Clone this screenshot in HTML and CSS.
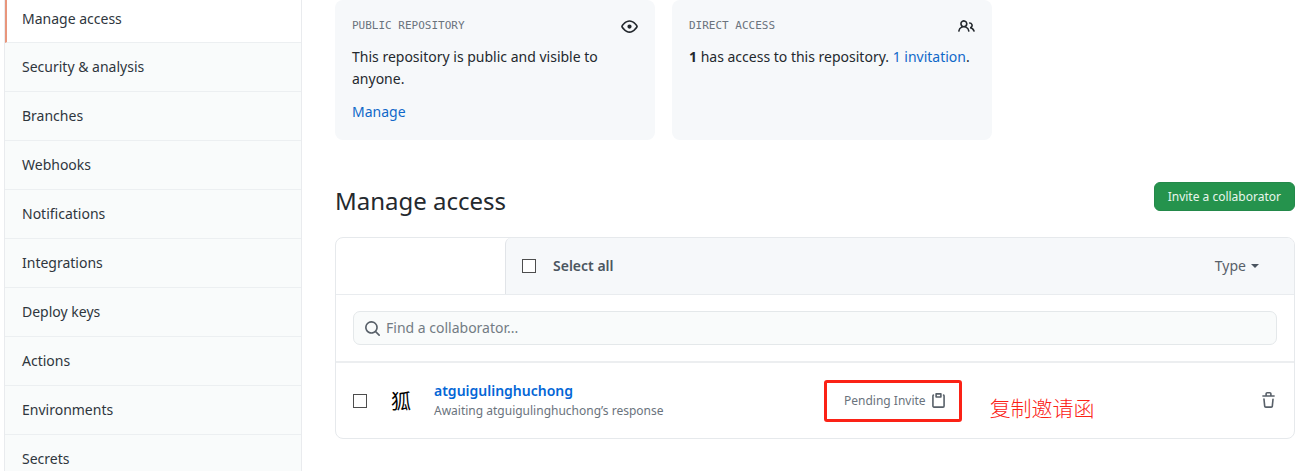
FILE: index.html
```
<!DOCTYPE html>
<html lang="en">
<head>
<meta charset="utf-8">
<meta name="viewport" content="width=device-width, initial-scale=1">
<title>Manage access</title>
<link rel="stylesheet" href="styles.css">
</head>
<body>
<div class="page">
  <nav class="menu" aria-label="Repository settings">
    <a class="menu-item selected" href="#" aria-current="page">Manage access</a>
    <a class="menu-item" href="#">Security &amp; analysis</a>
    <a class="menu-item" href="#">Branches</a>
    <a class="menu-item" href="#">Webhooks</a>
    <a class="menu-item" href="#">Notifications</a>
    <a class="menu-item" href="#">Integrations</a>
    <a class="menu-item" href="#">Deploy keys</a>
    <a class="menu-item" href="#">Actions</a>
    <a class="menu-item" href="#">Environments</a>
    <a class="menu-item" href="#">Secrets</a>
  </nav>
  <main class="content">
    <section class="cards">
      <article class="card">
        <header class="card-head">
          <span class="card-label">PUBLIC REPOSITORY</span>
          <svg class="icon-dark" width="17" height="17" viewBox="0 0 16 16" aria-hidden="true"><path fill-rule="evenodd" d="M1.679 7.932c.412-.621 1.242-1.75 2.366-2.717C5.175 4.242 6.527 3.5 8 3.5c1.473 0 2.824.742 3.955 1.715 1.124.967 1.954 2.096 2.366 2.717a.119.119 0 010 .136c-.412.621-1.242 1.75-2.366 2.717C10.825 11.758 9.473 12.5 8 12.5c-1.473 0-2.824-.742-3.955-1.715C2.92 9.818 2.09 8.69 1.679 8.068a.119.119 0 010-.136zM8 2c-1.981 0-3.67.992-4.933 2.078C1.797 5.169.88 6.423.43 7.1a1.619 1.619 0 000 1.798c.45.678 1.367 1.932 2.637 3.024C4.329 13.008 6.019 14 8 14c1.981 0 3.67-.992 4.933-2.078 1.27-1.091 2.187-2.345 2.637-3.023a1.619 1.619 0 000-1.798c-.45-.678-1.367-1.932-2.637-3.023C11.671 2.992 9.981 2 8 2zm0 8a2 2 0 100-4 2 2 0 000 4z"/></svg>
        </header>
        <p class="card-text">This repository is public and visible to anyone.</p>
        <a class="link" href="#">Manage</a>
      </article>
      <article class="card">
        <header class="card-head">
          <span class="card-label">DIRECT ACCESS</span>
          <svg class="icon-dark" width="17" height="17" viewBox="0 0 16 16" aria-hidden="true"><path fill-rule="evenodd" d="M5.5 3.5a2 2 0 100 4 2 2 0 000-4zM2 5.5a3.5 3.5 0 115.898 2.549 5.507 5.507 0 013.034 4.084.75.75 0 11-1.482.235 4.001 4.001 0 00-7.9 0 .75.75 0 01-1.482-.236A5.507 5.507 0 013.102 8.05 3.49 3.49 0 012 5.5zM11 4a.75.75 0 100 1.5 1.5 1.5 0 01.666 2.844.75.75 0 00-.416.672v.352a.75.75 0 00.574.73c1.2.289 2.162 1.2 2.522 2.372a.75.75 0 101.434-.44 5.01 5.01 0 00-2.56-3.012A3 3 0 0011 4z"/></svg>
        </header>
        <p class="card-text"><strong>1</strong> has access to this repository. <a class="link" href="#">1 invitation</a>.</p>
      </article>
    </section>

    <header class="heading">
      <h1 class="title">Manage access</h1>
      <button class="invite" type="button">Invite a collaborator</button>
    </header>

    <section class="box">
      <div class="toolbar">
        <div class="toolbar-main">
          <label class="select-all"><input class="check" type="checkbox">Select all</label>
          <button class="type" type="button">Type<span class="caret"></span></button>
        </div>
      </div>
      <div class="search-row">
        <label class="search">
          <svg class="icon-muted" width="17" height="17" viewBox="0 0 16 16" aria-hidden="true"><path fill-rule="evenodd" d="M11.5 7a4.499 4.499 0 11-8.998 0A4.499 4.499 0 0111.5 7zm-.82 4.74a6 6 0 111.06-1.06l3.04 3.04a.75.75 0 11-1.06 1.06l-3.04-3.04z"/></svg>
          <input class="search-input" type="text" placeholder="Find a collaborator..." aria-label="Find a collaborator">
        </label>
      </div>
      <div class="member">
        <input class="check" type="checkbox" aria-label="Select atguigulinghuchong">
        <span class="avatar" lang="zh">狐</span>
        <div class="member-info">
          <a class="member-name" href="#">atguigulinghuchong</a>
          <span class="member-note">Awaiting atguigulinghuchong’s response</span>
        </div>
        <div class="pending">
          <span>Pending Invite</span>
          <button class="icon-button" type="button" aria-label="Copy invite link"><svg width="17" height="17" viewBox="0 0 16 16" aria-hidden="true"><path fill-rule="evenodd" d="M5.75 1a.75.75 0 00-.75.75v3c0 .414.336.75.75.75h4.5a.75.75 0 00.75-.75v-3a.75.75 0 00-.75-.75h-4.5zm.75 3V2.5h3V4h-3zm-2.874-.467a.75.75 0 00-.752-1.298A1.75 1.75 0 002 3.75v9.5c0 .966.784 1.75 1.75 1.75h8.5A1.75 1.75 0 0014 13.25v-9.5a1.75 1.75 0 00-.874-1.515.75.75 0 10-.752 1.298.25.25 0 01.126.217v9.5a.25.25 0 01-.25.25h-8.5a.25.25 0 01-.25-.25v-9.5a.25.25 0 01.126-.217z"/></svg></button>
        </div>
        <span class="note" lang="zh">复制邀请函</span>
        <button class="icon-button trash" type="button" aria-label="Remove"><svg width="17" height="17" viewBox="0 0 16 16" aria-hidden="true"><path fill-rule="evenodd" d="M6.5 1.75a.25.25 0 01.25-.25h2.5a.25.25 0 01.25.25V3h-3V1.75zm4.5 0V3h2.25a.75.75 0 010 1.5H2.75a.75.75 0 010-1.5H5V1.75C5 .784 5.784 0 6.75 0h2.5C10.216 0 11 .784 11 1.75zM4.496 6.675a.75.75 0 10-1.492.15l.66 6.6A1.75 1.75 0 005.405 15h5.19c.9 0 1.652-.681 1.741-1.576l.66-6.6a.75.75 0 00-1.492-.149l-.66 6.6a.25.25 0 01-.249.225h-5.19a.25.25 0 01-.249-.225l-.66-6.6z"/></svg></button>
      </div>
    </section>
  </main>
</div>
</body>
</html>
```
FILE: styles.css
```
* {
  box-sizing: border-box;
}

body {
  margin: 0;
  background: #fff;
  color: #24292e;
  font: 14px/22px "Noto Sans", "Noto Sans CJK SC", sans-serif;
}

h1,
p {
  margin: 0;
}

button,
input {
  margin: 0;
  font: inherit;
  color: inherit;
}

a {
  text-decoration: none;
}

.page {
  display: flex;
  align-items: flex-start;
  gap: 33px;
  height: 100vh;
  padding: 0 17px 0 4px;
  overflow: hidden;
}

.menu {
  flex: 0 0 298px;
  display: flex;
  flex-direction: column;
  border: solid #e9ebee;
  border-width: 0 1px;
}

.menu-item {
  padding: 13px 17px;
  border-bottom: 1px solid #eceff1;
  background: #f9fbfb;
  color: #2f363d;
}

.menu-item.selected {
  padding: 8px 15px 12px;
  border-left: 2px solid #e8967c;
  background: #fff;
}

.content {
  flex: 1;
  min-width: 0;
}

.cards {
  display: flex;
  gap: 17px;
}

.card {
  flex: 0 0 calc(100% / 3);
  min-height: 140px;
  padding: 16px 17px;
  border-radius: 8px;
  background: #f6f8fa;
}

.card-head {
  display: flex;
  align-items: center;
  justify-content: space-between;
  height: 20px;
  margin-bottom: 10px;
}

.card-label {
  color: #6a737d;
  font: 11px/20px "DejaVu Sans Mono", monospace;
}

.card-text {
  margin-bottom: 11px;
}

.link {
  color: #1068c9;
}

.icon-dark {
  fill: #24292e;
}

.icon-muted {
  fill: #586069;
}

.heading {
  display: flex;
  align-items: flex-start;
  justify-content: space-between;
  padding: 42px 0 20px;
}

.title {
  padding-top: 3px;
  font-size: 24px;
  font-weight: 400;
  line-height: 32px;
}

.invite {
  height: 29px;
  padding: 0 13px;
  border: 1px solid #23894a;
  border-radius: 6px;
  background: #25934d;
  color: #e8f6ec;
  font-size: 12px;
  line-height: 20px;
}

.box {
  border: 1px solid #e6e9ec;
  border-radius: 8px;
}

.toolbar {
  padding-left: 169px;
  border-bottom: 1px solid #e9ecef;
}

.toolbar-main {
  display: flex;
  align-items: center;
  justify-content: space-between;
  height: 56px;
  padding: 0 35px 0 16px;
  border-left: 1px solid #e1e4e8;
  border-radius: 6px 7px 0 0;
  background: #f6f8fa;
  color: #586069;
}

.check {
  appearance: none;
  flex: none;
  width: 14px;
  height: 14px;
  border: 1px solid #4d4d4d;
  background: #fff;
}

.select-all {
  display: flex;
  align-items: center;
  gap: 17px;
  font-weight: 600;
  color: #4b5560;
}

.type {
  display: flex;
  align-items: center;
  gap: 5px;
  padding: 0;
  border: 0;
  background: none;
}

.caret {
  border: solid transparent;
  border-width: 4px 4px 0;
  border-top-color: #4b5560;
}

.search-row {
  padding: 16px 17px;
  border-bottom: 2px solid #eceef0;
}

.search {
  display: flex;
  align-items: center;
  gap: 5px;
  height: 34px;
  padding: 0 10px;
  border: 1px solid #e4e8ea;
  border-radius: 7px;
  background: #f9fbfb;
}

.search-input {
  flex: 1;
  min-width: 0;
  padding: 0;
  border: 0;
  outline: 0;
  background: none;
}

.search-input::placeholder {
  color: #737b84;
  opacity: 1;
}

.member {
  display: flex;
  align-items: center;
  height: 75px;
  padding: 0 17px;
}

.avatar {
  margin: 0 23px 0 24px;
  color: #000;
  font: 20px/24px "Noto Sans CJK SC", sans-serif;
}

.member-info {
  display: flex;
  flex-direction: column;
  flex: 0 0 390px;
}

.member-name {
  color: #0366d6;
  font-weight: 600;
  line-height: 20px;
}

.member-note {
  color: #6a737d;
  font-size: 12px;
  line-height: 20px;
}

.pending {
  display: flex;
  align-items: center;
  gap: 4px;
  height: 42px;
  padding: 0 12px 0 17px;
  border: 3px solid #fb2216;
  border-radius: 3px;
  color: #6a737d;
  font-size: 12px;
  white-space: nowrap;
}

.icon-button {
  display: flex;
  padding: 0;
  border: 0;
  background: none;
  fill: #586069;
}

.note {
  margin-left: 28px;
  padding-top: 12px;
  color: #fb2216;
  font: 21px/30px "Noto Sans CJK SC", sans-serif;
  font-weight: 300;
  white-space: nowrap;
}

.trash {
  margin-left: auto;
}
```
